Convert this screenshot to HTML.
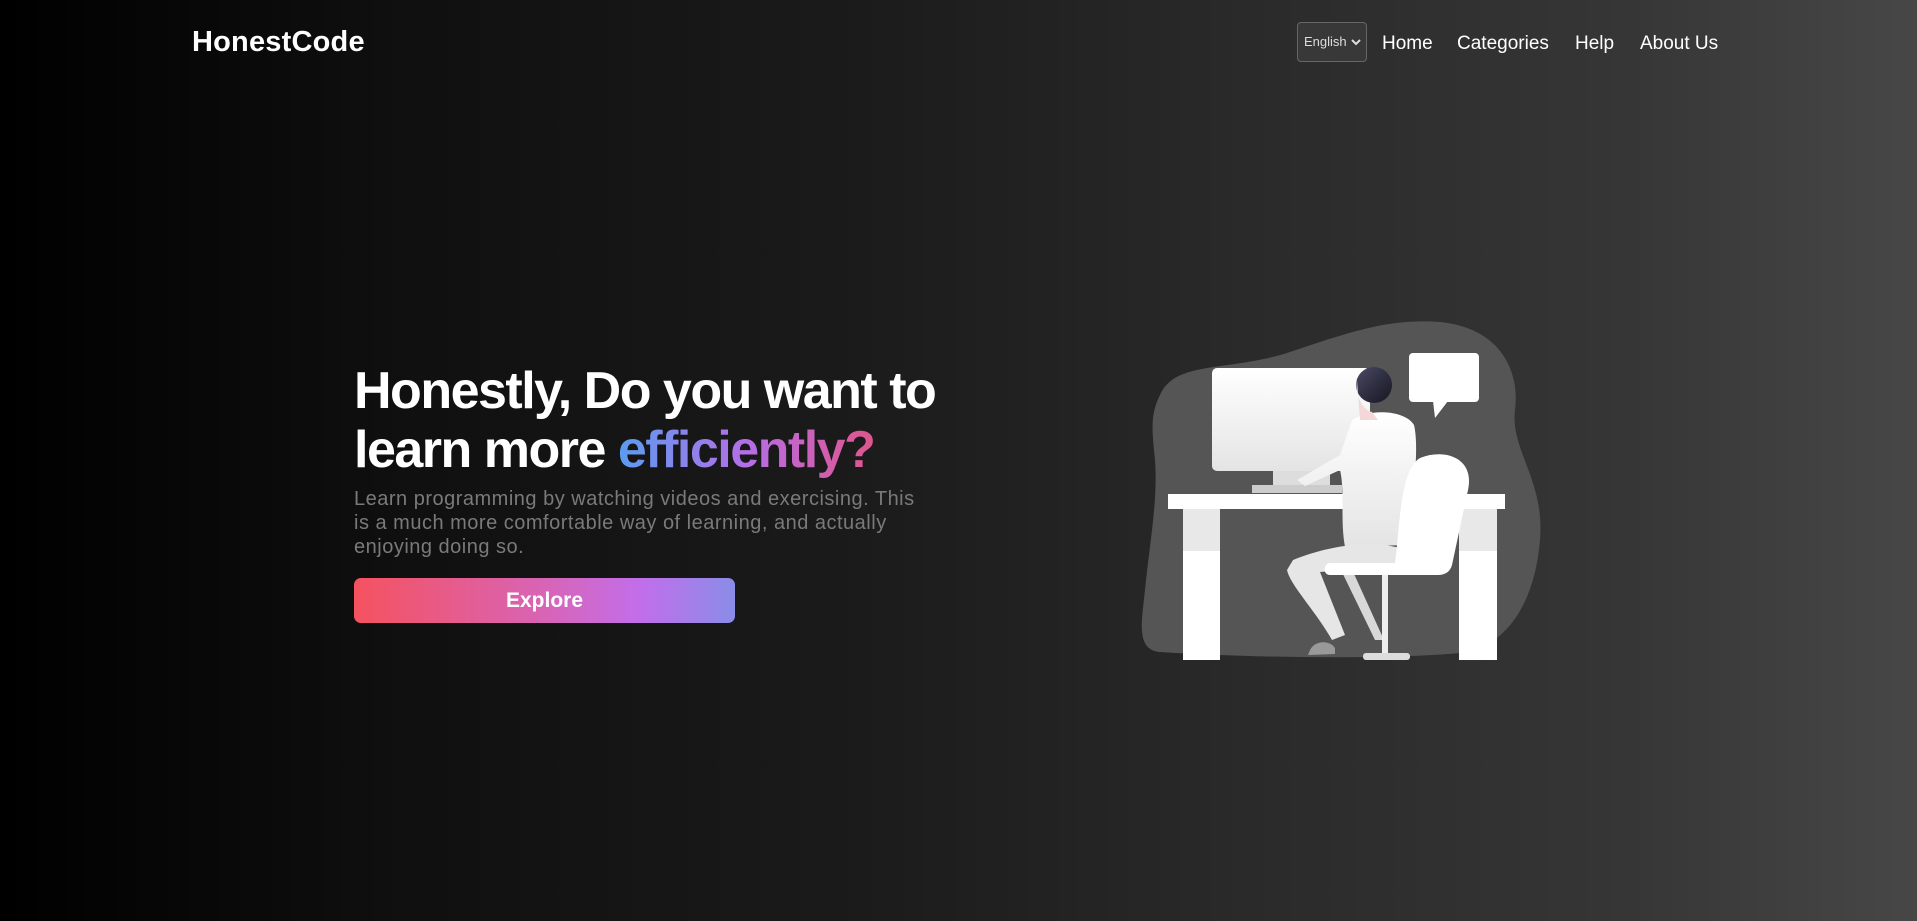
<!DOCTYPE html>
<html><head><meta charset="utf-8"><style>
*{margin:0;padding:0;box-sizing:border-box}
html,body{width:1917px;height:921px;overflow:hidden}
body{background:linear-gradient(90deg,#000 0%,#0f0f0f 20%,#1b1b1b 45%,#2a2a2a 65%,#363636 85%,#474747 100%);font-family:"Liberation Sans",sans-serif;position:relative;color:#fff}
.logo{position:absolute;left:192px;top:26px;font-size:29px;font-weight:bold;letter-spacing:0.2px}
.sel{position:absolute;left:1297px;top:22px;width:70px;height:40px;border:1px solid #666;border-radius:4px;background:#383838;color:#ddd;font-size:13px;line-height:38px;padding-left:6px}
.sel svg{position:absolute;right:5px;top:16px}
.nav a{position:absolute;top:33px;font-size:19px;color:#fff;text-decoration:none}
h1{position:absolute;left:354px;top:362px;font-size:52px;line-height:59px;font-weight:bold;letter-spacing:-1.5px}
.g{background:linear-gradient(90deg,#5b9cf0,#b46ee8 50%,#e0558c);-webkit-background-clip:text;background-clip:text;color:transparent}
p{position:absolute;left:354px;top:487px;width:580px;font-size:20px;line-height:24px;color:#7a7a7a;letter-spacing:0.5px}
.btn{position:absolute;left:354px;top:578px;width:381px;height:45px;border-radius:7px;background:linear-gradient(90deg,#f5525f,#d864b6 50%,#c26eea 75%,#8a8ce8);text-align:center;line-height:45px;font-weight:bold;font-size:21px}
svg.ill{position:absolute;left:0;top:0}
</style></head><body>
<div class="logo">HonestCode</div>
<div class="sel">English<svg width="10" height="7" viewBox="0 0 10 7"><path d="M1 1l4 4 4-4" stroke="#ddd" stroke-width="2" fill="none"/></svg></div>
<div class="nav"><a style="left:1382px">Home</a><a style="left:1457px">Categories</a><a style="left:1575px">Help</a><a style="left:1640px">About Us</a></div>
<h1>Honestly, Do you want to<br>learn more <span class="g">efficiently?</span></h1>
<p>Learn programming by watching videos and exercising. This is a much more comfortable way of learning, and actually enjoying doing so.</p>
<div class="btn">Explore</div>
<svg class="ill" width="1917" height="921" viewBox="0 0 1917 921">
<defs>
<linearGradient id="w" x1="0" y1="0" x2="0" y2="1"><stop offset="0" stop-color="#fff"/><stop offset="1" stop-color="#e4e4e4"/></linearGradient>
<linearGradient id="h" x1="0" y1="0" x2="1" y2="1"><stop offset="0" stop-color="#4a4a66"/><stop offset="1" stop-color="#15151f"/></linearGradient>
</defs>
<path d="M1160 395 C1175 360 1230 372 1290 352 C1350 332 1390 318 1440 322 C1500 328 1520 370 1515 410 C1510 450 1545 480 1540 540 C1535 600 1510 640 1470 652 C1400 660 1250 658 1160 652 C1135 650 1142 620 1145 590 C1150 540 1158 500 1155 460 C1152 430 1150 415 1160 395Z" fill="#555"/>
<rect x="1183" y="509" width="37" height="151" fill="#fff"/><rect x="1183" y="509" width="37" height="42" fill="#e8e8e8"/>
<rect x="1459" y="509" width="38" height="151" fill="#fff"/><rect x="1459" y="509" width="38" height="42" fill="#e8e8e8"/>
<rect x="1168" y="494" width="337" height="15" fill="#fff"/>
<rect x="1212" y="368" width="158" height="103" rx="5" fill="url(#w)"/>
<rect x="1273" y="471" width="57" height="14" fill="#ddd"/>
<rect x="1252" y="485" width="90" height="8" fill="#ccc"/>
<rect x="1409" y="353" width="70" height="49" rx="4" fill="#fff"/>
<path d="M1433 401 L1435 418 L1448 401Z" fill="#fff"/>
<path d="M1352 420 C1370 408 1405 410 1414 425 C1420 450 1412 510 1405 545 L1345 547 C1340 520 1345 490 1340 470 L1305 486 L1297 480 L1340 455Z" fill="url(#w)"/>
<path d="M1293 560 C1330 545 1370 540 1400 548 L1410 565 C1380 570 1340 570 1320 572 L1345 635 L1332 640 C1315 610 1290 585 1287 570Z" fill="#e6e6e6"/>
<path d="M1340 568 L1375 640 L1384 640 L1350 565Z" fill="#d8d8d8"/>
<path d="M1310 650 C1315 640 1330 640 1335 648 L1335 654 L1308 655Z" fill="#999"/>
<circle cx="1374" cy="385" r="18" fill="url(#h)"/>
<path d="M1357 380 C1355 395 1362 410 1372 412 L1378 420 L1360 420Z" fill="#f4d7d7"/>
<path d="M1420 458 C1445 448 1475 458 1468 490 L1452 565 C1450 572 1445 575 1438 575 L1330 575 C1322 575 1324 563 1330 563 L1395 563 C1400 525 1400 470 1420 458Z" fill="#fff"/>
<rect x="1382" y="575" width="6" height="80" fill="#eee"/>
<rect x="1363" y="653" width="47" height="7" rx="3" fill="#ddd"/>
</svg>
</body></html>
